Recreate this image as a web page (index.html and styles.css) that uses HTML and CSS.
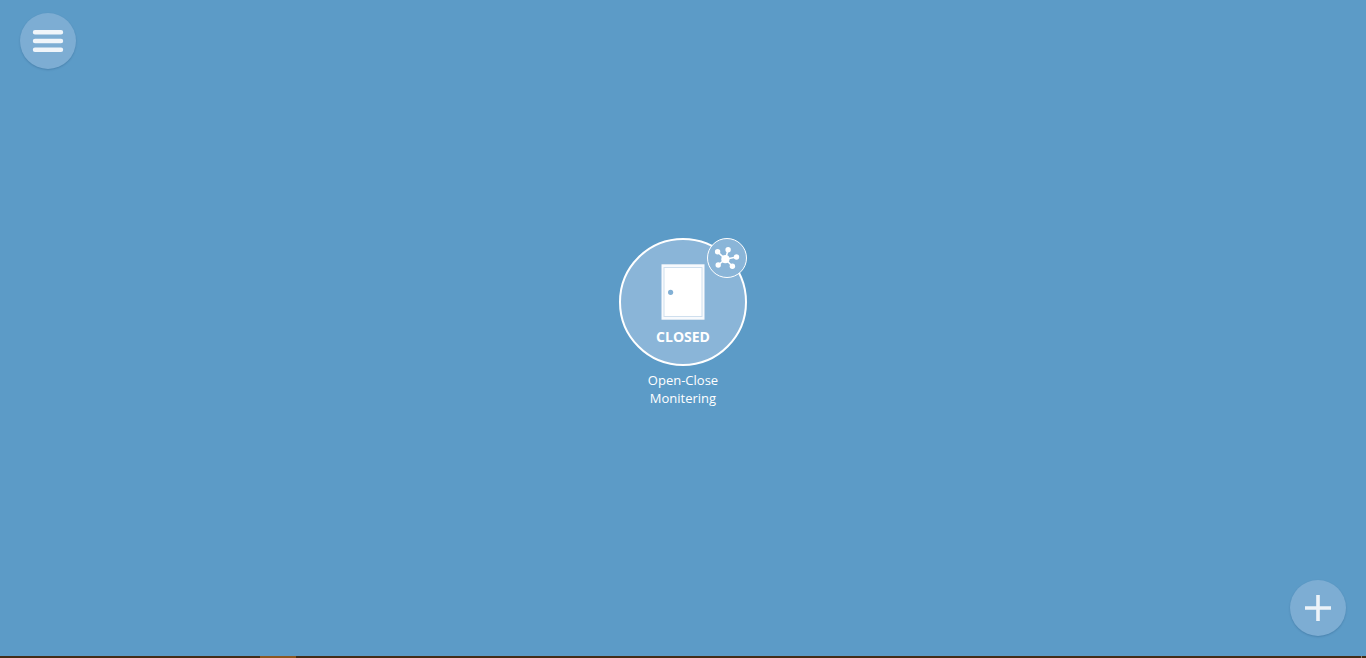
FILE: index.html
```html
<!DOCTYPE html>
<html lang="en">
<head>
<meta charset="utf-8">
<meta name="viewport" content="width=device-width, initial-scale=1">
<title>Open-Close Monitering</title>
<link rel="stylesheet" href="styles.css">
</head>
<body>
<div class="screen">
  <header class="top">
    <button class="round" type="button" aria-label="Menu">
      <svg width="56" height="56" viewBox="0 0 56 56" aria-hidden="true">
        <path d="M15 19.3H41M15 28H41M15 36.7H41" fill="none" stroke="#f0f5fa" stroke-width="4.4" stroke-linecap="round"/>
      </svg>
    </button>
  </header>
  <main class="stage">
    <div class="device">
      <button class="tile" type="button" aria-describedby="device-name">
        <svg class="door" width="44" height="56" viewBox="0 0 44 56" aria-hidden="true">
          <rect x="0.5" y="0.3" width="43" height="55.4" fill="#f8fafd"/>
          <rect x="3" y="3.5" width="38" height="49" fill="#fff" stroke="#cfdfee"/>
          <circle cx="9.6" cy="28.3" r="2.6" fill="#82b0d5"/>
        </svg>
        <span class="state">CLOSED</span>
      </button>
      <button class="badge" type="button" aria-label="Connections">
        <svg width="40" height="40" viewBox="0 0 40 40" aria-hidden="true">
          <path d="M18.4 21.2L10.6 13.8M18.4 21.2L21.1 11.8M18.4 21.2L29.5 19M18.4 21.2L11.2 27M18.4 21.2L25.4 28.2" stroke="#fff" stroke-width="1.6"/>
          <g fill="#fff">
            <circle cx="18.4" cy="21.2" r="4.1"/>
            <circle cx="10.6" cy="13.8" r="2.7"/>
            <circle cx="21.1" cy="11.8" r="2.7"/>
            <circle cx="29.5" cy="19" r="2.7"/>
            <circle cx="11.2" cy="27" r="2.7"/>
            <circle cx="25.4" cy="28.2" r="2.7"/>
          </g>
        </svg>
      </button>
      <div class="name" id="device-name">Open-Close Monitering</div>
    </div>
  </main>
  <div class="bottom">
    <button class="round" type="button" aria-label="Add">
      <svg width="56" height="56" viewBox="0 0 56 56" aria-hidden="true">
        <path d="M15 28H41M28 15V41" fill="none" stroke="#edf3f9" stroke-width="3.6"/>
      </svg>
    </button>
  </div>
  <div class="edge"><span class="edge-active"></span><span class="edge-tick"></span></div>
</div>
</body>
</html>
```
FILE: styles.css
```css
* { box-sizing: border-box; }

body {
  margin: 0;
  background: #5c9bc7;
  color: #fff;
  font-family: "Open Sans", "Noto Sans", sans-serif;
}

button {
  padding: 0;
  color: inherit;
  font: inherit;
  cursor: pointer;
}

svg { display: block; }

.screen {
  display: flex;
  flex-direction: column;
  min-height: 100vh;
}

.top { padding: 13px 20px 0; }

.round {
  display: block;
  width: 56px;
  height: 56px;
  border: 0;
  border-radius: 50%;
  background: #7dadd3;
  box-shadow: 0 1px 2px rgba(0, 40, 80, 0.2);
}

.stage {
  flex: 1;
  display: flex;
  align-items: center;
  justify-content: center;
  padding-bottom: 4px;
}

.device {
  position: relative;
  width: 128px;
}

.tile {
  display: flex;
  flex-direction: column;
  align-items: center;
  width: 128px;
  height: 128px;
  padding-top: 24px;
  border: 2px solid #fff;
  border-radius: 50%;
  background: #8ab5d8;
}

.state {
  margin-top: 8px;
  font-size: 14px;
  font-weight: 700;
  line-height: 18px;
}

.badge {
  position: absolute;
  top: 0;
  right: 0;
  display: flex;
  align-items: center;
  justify-content: center;
  width: 40px;
  height: 40px;
  border: 1px solid #fff;
  border-radius: 50%;
  background: #8ab5d8;
}

.badge svg { flex: none; }

.name {
  padding: 5px 20px 0;
  font-size: 13px;
  line-height: 18px;
  text-align: center;
}

.bottom {
  display: flex;
  justify-content: flex-end;
  padding: 0 20px 20px;
}

.edge {
  display: flex;
  justify-content: space-between;
  height: 2px;
  padding: 0 4px 0 19%;
  background: #432d17;
}

.edge-active {
  width: 36px;
  background: #8b5721;
}

.edge-tick {
  width: 1px;
  background: #8f8577;
}
```
